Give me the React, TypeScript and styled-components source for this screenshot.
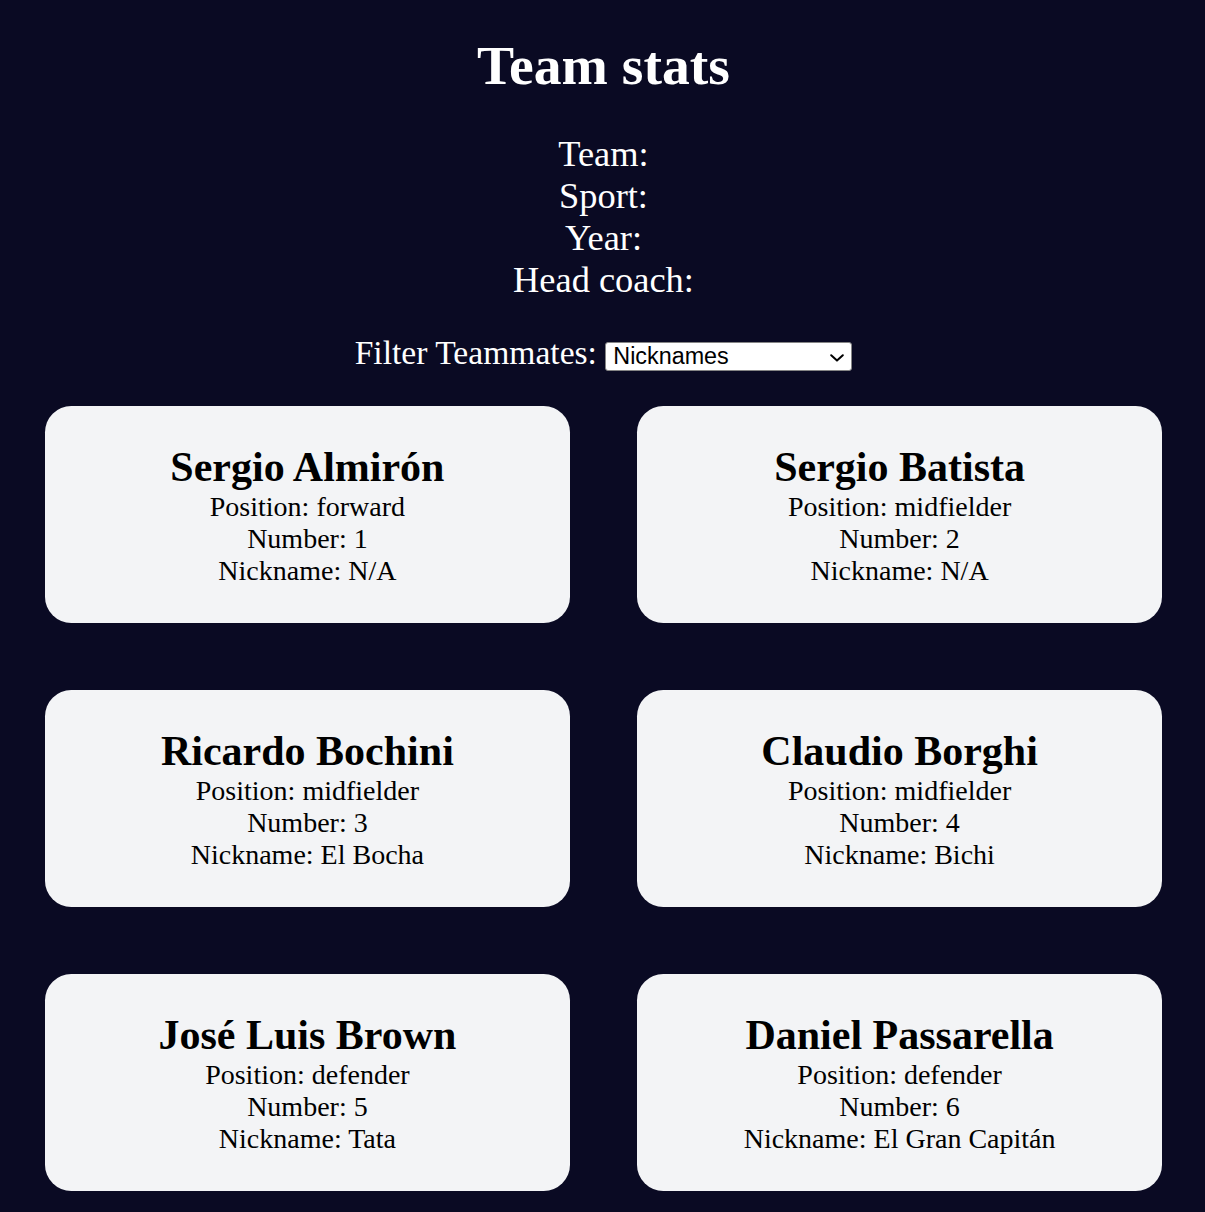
import React from "react";
import styled, { createGlobalStyle } from "styled-components";

const GlobalStyle = createGlobalStyle`
  *, *::before, *::after { box-sizing: border-box; }
  html, body { margin: 0; padding: 0; }
  body {
    background-color: #0a0a23;
    font-family: "Liberation Serif", "Times New Roman", serif;
    text-align: center;
  }
`;

const Page = styled.div`
  padding: 33px 0 40px 2px;
`;

const Title = styled.h1`
  margin: 0;
  color: #ffffff;
  font-size: 55.6px;
  font-weight: 700;
  line-height: normal;
`;

const TeamStats = styled.div`
  margin-top: 36px;
  color: #ffffff;
  font-size: 36.4px;
  line-height: normal;
`;

const StatLine = styled.p`
  margin: 0;
`;

const FilterRow = styled.div`
  margin-top: 33.3px;
  font-size: 33.6px;
  line-height: normal;
`;

const OptionsLabel = styled.label`
  color: #ffffff;
`;

const SelectWrap = styled.span`
  position: relative;
  display: inline-flex;
  vertical-align: baseline;
`;

const Select = styled.select`
  appearance: none;
  -webkit-appearance: none;
  width: 247px;
  height: 29.6px;
  margin: 0;
  padding: 0 30px 0 7px;
  border: 1px solid #858585;
  border-radius: 3px;
  background: #ffffff;
  color: #000000;
  font-family: "Liberation Sans", Arial, sans-serif;
  font-size: 23.33px;
  line-height: normal;
`;

const Chevron = styled.svg`
  position: absolute;
  right: 8px;
  top: 50%;
  margin-top: -2.5px;
  pointer-events: none;
`;

const Cards = styled.div`
  margin-top: 34px;
  display: grid;
  grid-template-columns: repeat(2, 525px);
  justify-content: center;
  column-gap: 67.2px;
  row-gap: 67.2px;
`;

const PlayerCard = styled.div`
  background-color: #f3f4f6;
  padding: 36.4px;
  border-radius: 26.25px;
  color: #000000;
`;

const PlayerName = styled.h2`
  margin: 0;
  font-size: 42px;
  font-weight: 700;
  line-height: normal;
`;

const PlayerInfo = styled.p`
  margin: 0;
  font-size: 28px;
  line-height: normal;
`;

const players = [
  { name: "Sergio Almirón", position: "forward", number: 1, nickname: "N/A" },
  { name: "Sergio Batista", position: "midfielder", number: 2, nickname: "N/A" },
  { name: "Ricardo Bochini", position: "midfielder", number: 3, nickname: "El Bocha" },
  { name: "Claudio Borghi", position: "midfielder", number: 4, nickname: "Bichi" },
  { name: "José Luis Brown", position: "defender", number: 5, nickname: "Tata" },
  { name: "Daniel Passarella", position: "defender", number: 6, nickname: "El Gran Capitán" },
];

export default function App() {
  return (
    <>
      <GlobalStyle />
      <Page>
        <Title>Team stats</Title>
        <main>
          <TeamStats>
            <StatLine>Team: <span id="team"></span></StatLine>
            <StatLine>Sport: <span id="sport"></span></StatLine>
            <StatLine>Year: <span id="year"></span></StatLine>
            <StatLine>Head coach: <span id="head-coach"></span></StatLine>
          </TeamStats>
          <FilterRow>
            <OptionsLabel htmlFor="players">Filter Teammates:</OptionsLabel>{" "}
            <SelectWrap>
              <Select id="players" name="players" defaultValue="nickname">
                <option value="all">All Players</option>
                <option value="nickname">Nicknames</option>
                <option value="forward">Forwards</option>
                <option value="midfielder">Midfielders</option>
                <option value="defender">Defenders</option>
                <option value="goalkeeper">Goalkeepers</option>
              </Select>
              <Chevron width="14" height="8" viewBox="0 0 14 8" aria-hidden="true">
                <polyline
                  points="1.2,1.2 7,6.6 12.8,1.2"
                  fill="none"
                  stroke="#000"
                  strokeWidth="2"
                  strokeLinecap="round"
                  strokeLinejoin="round"
                />
              </Chevron>
            </SelectWrap>
          </FilterRow>
          <Cards id="player-cards">
            {players.map((p) => (
              <PlayerCard key={p.number}>
                <PlayerName>{p.name}</PlayerName>
                <PlayerInfo>Position: {p.position}</PlayerInfo>
                <PlayerInfo>Number: {p.number}</PlayerInfo>
                <PlayerInfo>Nickname: {p.nickname}</PlayerInfo>
              </PlayerCard>
            ))}
          </Cards>
        </main>
      </Page>
    </>
  );
}
